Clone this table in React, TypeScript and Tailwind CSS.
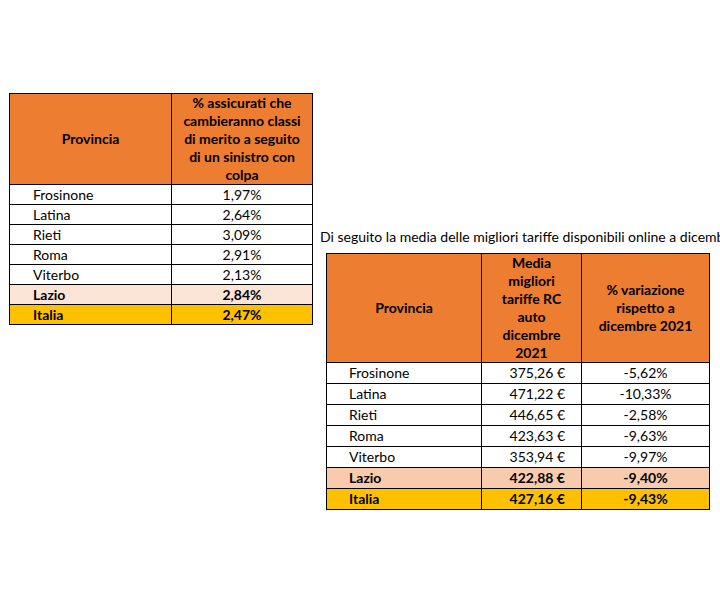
import React from 'react';

type Row = { name: string; values: string[] };

const rcaRows: Row[] = [
  { name: 'Frosinone', values: ['1,97%'] },
  { name: 'Latina', values: ['2,64%'] },
  { name: 'Rieti', values: ['3,09%'] },
  { name: 'Roma', values: ['2,91%'] },
  { name: 'Viterbo', values: ['2,13%'] },
];

const tariffRows: Row[] = [
  { name: 'Frosinone', values: ['375,26 €', '-5,62%'] },
  { name: 'Latina', values: ['471,22 €', '-10,33%'] },
  { name: 'Rieti', values: ['446,65 €', '-2,58%'] },
  { name: 'Roma', values: ['423,63 €', '-9,63%'] },
  { name: 'Viterbo', values: ['353,94 €', '-9,97%'] },
];

const cell = 'border border-black p-0 leading-[18px]';

export default function App() {
  return (
    <div
      className="w-[720px] h-[607px] overflow-hidden bg-white text-[14px] text-black flex"
      style={{ fontFamily: 'Lato, "Open Sans", sans-serif' }}
    >
      {/* first table: classi di merito */}
      <div className="pl-[9px] pt-[93px] shrink-0">
        <table className="border-collapse">
          <thead>
            <tr className="bg-[#ed7d31] h-[91px]">
              <th className={`${cell} w-[162px] font-bold text-center`}>Provincia</th>
              <th className={`${cell} w-[141px] font-bold text-center`}>
                % assicurati che<br />cambieranno classi<br />di merito a seguito<br />di un sinistro con<br />colpa
              </th>
            </tr>
          </thead>
          <tbody>
            {rcaRows.map((r) => (
              <tr key={r.name} className="h-[20px]">
                <td className={`${cell} pl-[23px]`}>{r.name}</td>
                <td className={`${cell} text-center`}>{r.values[0]}</td>
              </tr>
            ))}
            <tr className="h-[20px] bg-[#fce4d6] font-bold">
              <td className={`${cell} pl-[23px]`}>Lazio</td>
              <td className={`${cell} text-center`}>2,84%</td>
            </tr>
            <tr className="h-[20px] bg-[#ffc000] font-bold">
              <td className={`${cell} pl-[23px]`}>Italia</td>
              <td className={`${cell} text-center`}>2,47%</td>
            </tr>
          </tbody>
        </table>
      </div>

      {/* second block: tariffe online */}
      <div className="pl-[7px] pt-[228px] shrink-0">
        <p className="whitespace-nowrap leading-[18px]">
          Di seguito la media delle migliori tariffe disponibili online a dicembre 2022 nel Lazio:
        </p>
        <table className="border-collapse ml-[6px] mt-[7px]">
          <thead>
            <tr className="bg-[#ed7d31] h-[109px]">
              <th className={`${cell} w-[155px] font-bold text-center`}>Provincia</th>
              <th className={`${cell} w-[100px] font-bold text-center`}>
                Media<br />migliori<br />tariffe RC<br />auto<br />dicembre<br />2021
              </th>
              <th className={`${cell} w-[128px] font-bold text-center`}>
                % variazione<br />rispetto a<br />dicembre 2021
              </th>
            </tr>
          </thead>
          <tbody>
            {tariffRows.map((r) => (
              <tr key={r.name} className="h-[21px]">
                <td className={`${cell} pl-[22px]`}>{r.name}</td>
                <td className={`${cell} text-right pr-[16px]`}>{r.values[0]}</td>
                <td className={`${cell} text-center`}>{r.values[1]}</td>
              </tr>
            ))}
            <tr className="h-[21px] bg-[#f8cbad] font-bold">
              <td className={`${cell} pl-[22px]`}>Lazio</td>
              <td className={`${cell} text-right pr-[16px]`}>422,88 €</td>
              <td className={`${cell} text-center`}>-9,40%</td>
            </tr>
            <tr className="h-[21px] bg-[#ffc000] font-bold">
              <td className={`${cell} pl-[22px]`}>Italia</td>
              <td className={`${cell} text-right pr-[16px]`}>427,16 €</td>
              <td className={`${cell} text-center`}>-9,43%</td>
            </tr>
          </tbody>
        </table>
      </div>
    </div>
  );
}
